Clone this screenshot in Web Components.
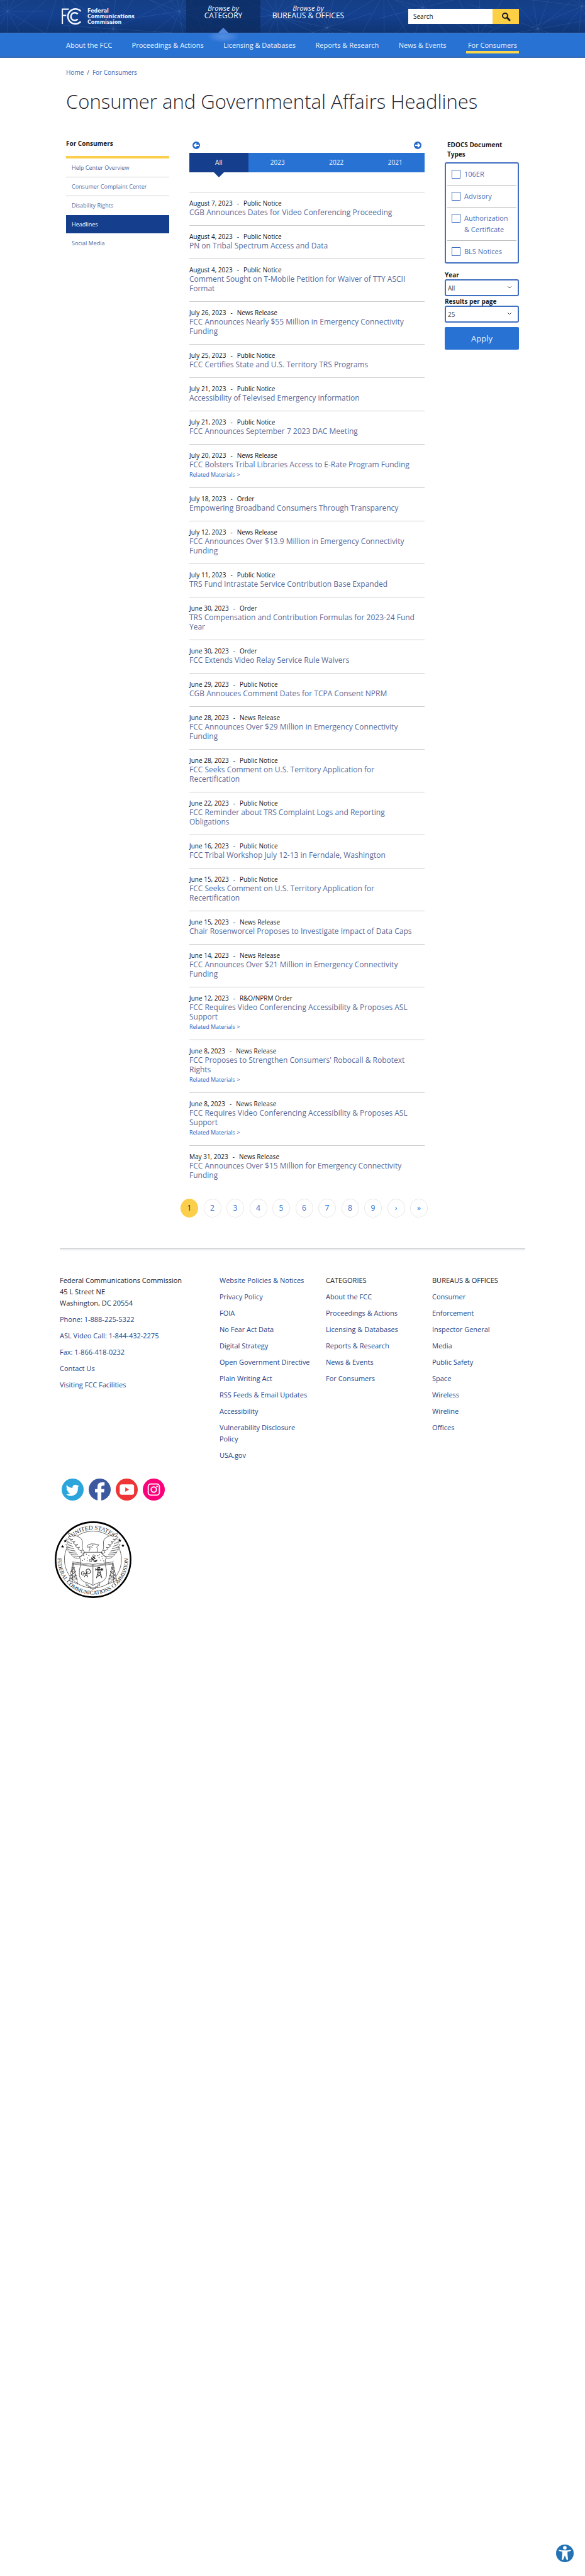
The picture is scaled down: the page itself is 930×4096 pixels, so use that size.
<!DOCTYPE html>
<html lang="en">
<head>
<meta charset="utf-8">
<meta name="viewport" content="width=device-width, initial-scale=1">
<title>Consumer and Governmental Affairs Headlines</title>
<style>
:root{--navy:#153f8c;--blue:#2872d4;--gold:#fccf4b;--link:#566a9b;--line:#ccc}
body{margin:0;min-height:100vh;background:#fff;color:#1c1c24;font-family:"Open Sans","Noto Sans",sans-serif;font-size:11px}
h1{margin:19px 0 40px;font-size:31px;line-height:40px;font-weight:300;color:#25252f}
.wrap{max-width:720px;margin:0 auto;padding-top:16px}
.columns{display:grid;grid-template-columns:164px minmax(0,1fr) 118px;column-gap:32px;align-items:start}
</style>
</head>
<body>
<site-header></site-header>
<site-nav></site-nav>
<main class="wrap">
  <bread-crumb></bread-crumb>
  <h1>Consumer and Governmental Affairs Headlines</h1>
  <div class="columns">
    <side-menu></side-menu>
    <section aria-label="Headlines">
      <year-tabs></year-tabs>
      <headline-list></headline-list>
      <page-list></page-list>
    </section>
    <edocs-filter></edocs-filter>
  </div>
</main>
<site-footer></site-footer>
<access-button></access-button>

<script>
const define = (name, html) => {
  const t = document.createElement('template');
  t.innerHTML = '<style>*{box-sizing:border-box}:host{display:block}a{text-decoration:none;color:inherit}ul{list-style:none;margin:0;padding:0}button,input,select{font-family:inherit}</style>' + html;
  customElements.define(name, class extends HTMLElement {
    constructor() {
      super();
      this.attachShadow({mode: 'open'}).append(t.content.cloneNode(true));
    }
  });
};

/* faint web of lines behind the masthead */
const nodes = [[12,18],[95,-20],[180,46],[285,18],[330,70],[440,24],[520,44],[610,-10],[672,12],[760,60],[855,46],[925,10]];
let web = '';
nodes.forEach(([x, y], i) => {
  for (let k = 0; k < 12; k++) {
    const a = (k * 30 + i * 17) * Math.PI / 180, r = 60 + (k * 37 + i * 23) % 70;
    web += `M${x} ${y}L${Math.round(x + r * Math.cos(a))} ${Math.round(y + r * Math.sin(a))}`;
  }
});

define('site-header', `
<style>
:host{position:relative;z-index:1;overflow:visible;background:linear-gradient(#153f85,#144090 45%,#0f3573)}
.web{position:absolute;left:0;top:0;width:100%;height:52px}
.bar{position:relative;max-width:720px;height:52px;margin:0 auto;display:grid;grid-template-columns:191px 118px 152px 1fr;color:#fff}
.logo{display:flex;gap:10px;margin:13px 0 0 -7px;font:bold 8px/9px "DejaVu Sans",sans-serif;color:#e9f2ff}
.logo svg{width:31px;height:27px}
.tab{padding-top:7px;text-align:center;font-size:12px;line-height:12px;position:relative;height:52px}
.tab i{display:block;font-size:11px;line-height:12px}
.on{background:#0c2a5db0}
.on::before{content:"";position:absolute;left:50%;margin-left:-8px;bottom:0;border:8px solid transparent;border-top:0;border-bottom-color:#5089de}
.on::after{content:"";position:absolute;left:50%;margin-left:-26px;top:48px;width:52px;height:20px;background:radial-gradient(closest-side,#5c92e4cc,#5c92e499 40%,transparent);clip-path:inset(4px 0 0 0)}
form{justify-self:end;margin-top:14px;display:flex;width:176px;height:24px}
input{flex:1;min-width:0;border:0;border-radius:0;padding:0 8px;font-size:10px;background:#fff;color:#111}
input::placeholder{color:#111;opacity:1}
button{width:42px;border:0;padding:0;background:#fccf45;display:grid;place-items:center}
button svg{width:15px;height:15px}
</style>
<svg class="web" viewBox="0 0 930 52" preserveAspectRatio="xMidYMid slice" aria-hidden="true"><path d="${web}" stroke="#6ea0d8" stroke-opacity=".17" fill="none"/></svg>
<div class="bar">
  <a class="logo" href="#" aria-label="FCC home">
    <svg viewBox="0 0 136 118" fill="none" stroke="#f1f7ff" aria-hidden="true">
      <path d="M5 109V7H50M5 50H32" stroke-width="9"/>
      <path d="M133 21A52 52 0 1 0 133 94" stroke-width="11"/>
      <path d="M112 41A27 27 0 1 0 112 76" stroke-width="11"/>
    </svg>
    <span>Federal<br>Communications<br>Commission</span>
  </a>
  <a class="tab on" href="#"><i>Browse by</i>CATEGORY</a>
  <a class="tab" href="#"><i>Browse by</i>BUREAUS &amp; OFFICES</a>
  <form role="search">
    <input type="search" placeholder="Search" aria-label="Search">
    <button type="button" aria-label="Search"><svg viewBox="0 0 15 15" fill="none" stroke="#1b1b20"><circle cx="6" cy="6" r="4" stroke-width="2"/><path d="M9 9l4 4" stroke-width="3" stroke-linecap="round"/></svg></button>
  </form>
</div>`);

define('site-nav', `
<style>
:host{background:linear-gradient(#3f73bb,#2872d4 2px,#2872d4 37px,#356cb8 38px);color:#eaf4ff}
nav{max-width:720px;margin:0 auto;padding:11px 0 7px;display:flex;justify-content:space-between}
a{font-size:11px;line-height:18px;border-bottom:4px solid transparent}
.on{border-color:#fbd64b;padding:0 3px}
</style>
<nav aria-label="Main"><a href="#">About the FCC</a><a href="#">Proceedings &amp; Actions</a><a href="#">Licensing &amp; Databases</a><a href="#">Reports &amp; Research</a><a href="#">News &amp; Events</a><a class="on" href="#">For Consumers</a></nav>`);

define('bread-crumb', `
<style>nav{display:flex;gap:5px;font-size:10px;line-height:14px;color:#555}a{color:#3768b8}</style>
<nav aria-label="Breadcrumb"><a href="#">Home</a><span>/</span><a href="#">For Consumers</a></nav>`);

define('side-menu', `
<style>
h2{margin:0 0 13px;font-size:10px;line-height:14px;font-weight:700}
ul{border-top:4px solid var(--gold)}
a{display:block;height:30px;padding:0 9px;font-size:9px;line-height:29px;color:var(--link);border-bottom:1px solid var(--line)}
.plain{border-color:transparent}
.on{background:var(--navy);border-color:#fff;color:#fff}
</style>
<h2>For Consumers</h2>
<ul><li><a href="#">Help Center Overview</a><li><a href="#">Consumer Complaint Center</a><li><a class="plain" href="#">Disability Rights</a><li><a class="on" href="#">Headlines</a><li><a class="plain" href="#">Social Media</a></ul>`);

define('year-tabs', `
<style>
.arrows{display:flex;justify-content:space-between;align-items:center;height:20px;padding:0 5px;margin-bottom:2px}
.arrows button{width:12px;height:12px;border:0;padding:0;border-radius:50%;background:#2468cc;display:grid}
svg{width:12px;height:12px;fill:none;stroke:#fff;stroke-width:2}
nav{display:grid;grid-template-columns:repeat(4,1fr);background:var(--blue);color:#f0f6ff;margin-bottom:31px}
a{position:relative;text-align:center;font-size:10px;line-height:31px}
.on{background:var(--navy)}
.on::after{content:"";position:absolute;left:50%;top:100%;margin-left:-8px;border:8px solid transparent;border-bottom:0;border-top-color:var(--navy)}
</style>
<div class="arrows"><button type="button" aria-label="Previous years"><svg viewBox="0 0 12 12"><path d="M10 6H3M6 3L3 6l3 3"/></svg></button><button type="button" aria-label="Next years"><svg viewBox="0 0 12 12"><path d="M2 6h7M6 3l3 3-3 3"/></svg></button></div>
<nav aria-label="Years"><a class="on" href="#">All</a><a href="#">2023</a><a href="#">2022</a><a href="#">2021</a></nav>`);

define('headline-item', `
<style>
:host{border-top:1px solid var(--line);padding:10px 0 13px}
.meta{display:flex;gap:7px;font-size:10px;line-height:14px;color:#111}
.title{font-size:12px;line-height:15px;color:var(--link)}
</style>
<div class="meta"><slot name="date"></slot><span>-</span><slot name="kind"></slot></div>
<a class="title" href="#"><slot></slot></a>
<slot name="related"></slot>`);

const PN = 'Public Notice', NR = 'News Release';
const headlines = [
 ['August 7, 2023', PN, 'CGB Announces Dates for Video Conferencing Proceeding'],
 ['August 4, 2023', PN, 'PN on Tribal Spectrum Access and Data'],
 ['August 4, 2023', PN, 'Comment Sought on T-Mobile Petition for Waiver of TTY ASCII Format'],
 ['July 26, 2023', NR, 'FCC Announces Nearly $55 Million in Emergency Connectivity Funding'],
 ['July 25, 2023', PN, 'FCC Certifies State and U.S. Territory TRS Programs'],
 ['July 21, 2023', PN, 'Accessibility of Televised Emergency information'],
 ['July 21, 2023', PN, 'FCC Announces September 7 2023 DAC Meeting'],
 ['July 20, 2023', NR, 'FCC Bolsters Tribal Libraries Access to E-Rate Program Funding', 1],
 ['July 18, 2023', 'Order', 'Empowering Broadband Consumers Through Transparency'],
 ['July 12, 2023', NR, 'FCC Announces Over $13.9 Million in Emergency Connectivity Funding'],
 ['July 11, 2023', PN, 'TRS Fund Intrastate Service Contribution Base Expanded'],
 ['June 30, 2023', 'Order', 'TRS Compensation and Contribution Formulas for 2023-24 Fund Year'],
 ['June 30, 2023', 'Order', 'FCC Extends Video Relay Service Rule Waivers'],
 ['June 29, 2023', PN, 'CGB Annouces Comment Dates for TCPA Consent NPRM'],
 ['June 28, 2023', NR, 'FCC Announces Over $29 Million in Emergency Connectivity Funding'],
 ['June 28, 2023', PN, 'FCC Seeks Comment on U.S. Territory Application for Recertification'],
 ['June 22, 2023', PN, 'FCC Reminder about TRS Complaint Logs and Reporting Obligations'],
 ['June 16, 2023', PN, 'FCC Tribal Workshop July 12-13 in Ferndale, Washington'],
 ['June 15, 2023', PN, 'FCC Seeks Comment on U.S. Territory Application for Recertification'],
 ['June 15, 2023', NR, 'Chair Rosenworcel Proposes to Investigate Impact of Data Caps'],
 ['June 14, 2023', NR, 'FCC Announces Over $21 Million in Emergency Connectivity Funding'],
 ['June 12, 2023', 'R&amp;O/NPRM Order', 'FCC Requires Video Conferencing Accessibility &amp; Proposes ASL Support', 1],
 ['June 8, 2023', NR, "FCC Proposes to Strengthen Consumers' Robocall &amp; Robotext Rights", 1],
 ['June 8, 2023', NR, 'FCC Requires Video Conferencing Accessibility &amp; Proposes ASL Support', 1],
 ['May 31, 2023', NR, 'FCC Announces Over $15 Million for Emergency Connectivity Funding'],
];
define('headline-list', '<style>a{display:block;padding-top:2px;font-size:9px;line-height:14px;color:#2a66c0}</style>' + headlines.map(([d, k, t, r]) =>
 `<headline-item><span slot="date">${d}</span><span slot="kind">${k}</span>${t}${r ? '<a slot="related" href="#">Related Materials &gt;</a>' : ''}</headline-item>`).join(''));

define('page-list', `
<style>
nav{display:flex;justify-content:space-between;margin:17px -5px 0 -14px}
a{width:28px;height:30px;border:1px solid #e9e9e9;border-radius:50%;text-align:center;font-size:12px;line-height:28px;color:#2f6fd0}
.on{background:var(--gold);border-color:var(--gold);color:#222}
</style>
<nav aria-label="Pages"><a class="on" href="#">1</a>${[2,3,4,5,6,7,8,9,'›','»'].map(n => `<a href="#">${n}</a>`).join('')}</nav>`);

define('edocs-filter', `
<style>
form{padding-top:2px}
fieldset{margin:0 0 11px;padding:0;border:0;min-width:0}
legend{padding:0 4px;margin-bottom:5px;font-size:10px;line-height:15px;font-weight:700}
.box{border:2px solid #3f6fc0;border-radius:3px}
.box label{display:grid;grid-template-columns:14px 1fr;column-gap:6px;margin:0 2px;padding:8px 8px 8px 7px;border-bottom:1px solid #bbb;font-size:11px;line-height:18px;color:#4a6fb8}
.box label:last-child{border:0}
input{appearance:none;width:14px;height:14px;margin:2px 0 0;border:1px solid #3a6ab8;outline:0}
.name{display:block;font-size:10px;line-height:14px;font-weight:700;margin-top:1px}
.pick{position:relative;height:27px}
select{appearance:none;width:100%;height:27px;border:2px solid #3f6fc0;border-radius:3px;background:#fff;padding:0 3px;font-size:10px;color:#444}
.pick svg{position:absolute;right:11px;top:9px;width:8px;height:8px;fill:none;stroke:#444;pointer-events:none}
button{width:100%;height:36px;margin-top:7px;border:0;border-radius:2px;background:var(--blue);color:#e9f2ff;font-size:13px}
</style>
<form>
<fieldset><legend>EDOCS Document Types</legend>
<div class="box">
<label><input type="checkbox"><span>106ER</span></label>
<label><input type="checkbox"><span>Advisory</span></label>
<label><input type="checkbox"><span>Authorization &amp; Certificate</span></label>
<label><input type="checkbox"><span>BLS Notices</span></label>
</div></fieldset>
<label class="name" for="year">Year</label>
<div class="pick"><select id="year"><option>All</option></select><svg viewBox="0 0 8 8"><path d="M1 2l3 3 3-3"/></svg></div>
<label class="name" for="per">Results per page</label>
<div class="pick"><select id="per"><option>25</option></select><svg viewBox="0 0 8 8"><path d="M1 2l3 3 3-3"/></svg></div>
<button type="button">Apply</button>
</form>`);

const star = (x, y) => `<path transform="translate(${x} ${y})" d="M0-11L3-3 11-3 5 2 7 10 0 5-7 10-5 2-11-3-3-3z" fill="#000" stroke="none"/>`;
/* one wing, shield half and tower; mirrored about x=284 for the other side */
const half = `
<path d="M108 101C130 118 165 120 190 135C225 155 205 190 212 215Q218 232 228 239M108 101Q118 130 135 128L112 134Q122 152 146 148L128 154Q140 172 160 166L146 174Q160 192 180 186L162 194Q172 212 192 204L180 215Q195 232 212 226L200 238Q210 252 226 240L208 262L194 272"/>
<path stroke-width="2" d="M122 150L100 146Q105 168 138 180L104 166Q105 188 146 198L96 184Q108 208 152 214L99 202Q112 228 162 230L105 220Q122 248 172 244L118 240Q138 264 180 256L132 256Q152 280 188 268L150 272Q168 290 196 278"/>
<path d="M228 239Q215 265 190 268Q202 290 200 322Q186 360 190 400Q200 440 240 448Q265 455 284 468"/>
<path stroke-width="2.5" d="M146 310L120 432M146 310L180 460M146 310L142 450M138 345H156L132 372H165L130 398H170L124 424H178M138 345L165 372 130 398 178 424M156 345L132 372 170 398 124 424M120 432L180 460"/>
<path stroke-width="2.5" d="M140 305L284 322M142 314L284 330M148 320L284 338"/>
<path d="M236 448L238 470 250 462 252 480 264 474 268 490 276 486 284 498"/>`;
define('fcc-seal', `
<style>:host{width:122px;height:122px}svg{display:block;width:122px;height:122px}text{font-family:"Liberation Serif",serif;fill:#222;stroke:none}</style>
<svg viewBox="20 25 530 530" fill="none" stroke="#222" stroke-width="3" role="img" aria-label="FCC seal">
<defs><path id="top" d="M77 289A207 207 0 0 1 491 289"/><path id="low" d="M48 230A243 243 0 1 0 520 230"/></defs>
<circle cx="285" cy="290" r="259" stroke="#000" stroke-width="11"/>
<path d="M178 124A197 197 0 0 1 392 124M108 200A197 197 0 1 0 460 200"/>
<text font-size="41" text-anchor="middle"><textPath href="#top" startOffset="50%">UNITED STATES</textPath></text>
<text font-size="38" text-anchor="middle"><textPath href="#low" startOffset="50%">FEDERAL COMMUNICATIONS COMMISSION</textPath></text>
${star(93,160)}${star(74,199)}${star(470,157)}${star(491,192)}
${half}<g transform="translate(568 0) scale(-1 1)">${half}</g>
<path d="M228 239H344M284 322V468M256 232Q268 216 262 202L244 204Q240 196 250 188Q272 176 298 182Q312 186 326 188Q312 196 310 204Q322 212 312 238M262 202Q272 198 280 206M276 190L286 192"/>
<g fill="#222" stroke="none">${[[220,262],[238,252],[256,262],[246,278],[226,286],[262,290],[212,296],[244,298],[330,256],[346,266],[326,276],[352,284],[336,294],[358,298],[318,262]].map(([x,y])=>`<circle cx="${x}" cy="${y}" r="3"/>`).join('')}</g>
<g stroke-width="3"><path d="M286 256L300 262 294 276 280 270zM264 292L278 288 274 304 260 302z"/><path d="M272 276L290 294M284 270L300 284" stroke-width="8"/><path d="M288 300Q306 312 314 292z" fill="#222"/></g>
<g stroke-width="4"><ellipse cx="252" cy="370" rx="14" ry="16" transform="rotate(-30 252 370)"/><ellipse cx="214" cy="384" rx="10" ry="13"/><path d="M238 380L224 412M238 380L248 412M230 396L246 404M214 384L236 388M252 370L236 384"/></g>
<g stroke-width="4"><path d="M326 344L308 418M326 344L346 418M318 376L336 384M314 392L342 406M336 376L314 396M338 390L310 412M302 358H352"/><path d="M304 350V366M314 348V366M342 348V366M352 350V366M316 344H334" stroke-width="6"/></g>
</svg>`);

define('site-footer', `
<style>
footer{max-width:740px;margin:49px auto 0;border-top:3px double #c4c8cc;padding:39px 0 40px;font-size:11px;line-height:18px;color:#1b1b2a}
.cols{display:grid;grid-template-columns:254px 169px 169px 1fr}
address{font-style:normal}
a{color:#22448a}
li{margin-bottom:8px}
li:last-child{margin-bottom:0}
.cols ul:nth-child(2){padding-right:22px}
.social{display:flex;gap:8px;margin:28px 0 33px 3px}
.social svg{display:block;width:35px;height:35px}
fcc-seal{margin-left:-8px}
</style>
<footer>
<div class="cols">
<ul><li><address>Federal Communications Commission<br>45 L Street NE<br>Washington, DC 20554</address><li><a href="#">Phone: 1-888-225-5322</a><li><a href="#">ASL Video Call: 1-844-432-2275</a><li><a href="#">Fax: 1-866-418-0232</a><li><a href="#">Contact Us</a><li><a href="#">Visiting FCC Facilities</a></ul>
<ul>${['Website Policies &amp; Notices','Privacy Policy','FOIA','No Fear Act Data','Digital Strategy','Open Government Directive','Plain Writing Act','RSS Feeds &amp; Email Updates','Accessibility','Vulnerability Disclosure Policy','USA.gov'].map(t=>`<li><a href="#">${t}</a>`).join('')}</ul>
<ul><li>CATEGORIES${['About the FCC','Proceedings &amp; Actions','Licensing &amp; Databases','Reports &amp; Research','News &amp; Events','For Consumers'].map(t=>`<li><a href="#">${t}</a>`).join('')}</ul>
<ul><li>BUREAUS &amp; OFFICES${['Consumer','Enforcement','Inspector General','Media','Public Safety','Space','Wireless','Wireline','Offices'].map(t=>`<li><a href="#">${t}</a>`).join('')}</ul>
</div>
<div class="social">
<a href="#" aria-label="Twitter"><svg viewBox="0 0 150 150"><circle cx="75" cy="75" r="75" fill="#2ba5dc"/><path fill="#fff" d="M118 49q-6 3-10 3 6-4 8-9-6 3-11 4a19 19 0 0 0-31 17q-24-1-39-19-8 14 6 25-5 0-8-2 0 15 15 19-4 1-8 0 4 12 17 13-11 9-27 8 42 25 72-8 9-13 9-30v-13q5-3 7-8z"/></svg></a>
<a href="#" aria-label="Facebook"><svg viewBox="0 0 150 150"><circle cx="75" cy="75" r="75" fill="#3c599f"/><path fill="#fff" d="M60 150V94H43V72H60V56Q60 26 90 26H108V48H96Q86 48 86 58V72H107L104 94H86V150z"/></svg></a>
<a href="#" aria-label="YouTube"><svg viewBox="0 0 150 150"><circle cx="75" cy="75" r="75" fill="#ee3434"/><rect x="27" y="40" width="98" height="70" rx="14" fill="#fff"/><path fill="#ee3434" d="M65 60L90 75 65 90z"/></svg></a>
<a href="#" aria-label="Instagram"><svg viewBox="0 0 150 150" fill="none" stroke="#fff" stroke-width="8"><circle cx="75" cy="75" r="75" fill="#fb007a" stroke="none"/><rect x="37" y="37" width="76" height="76" rx="17"/><circle cx="75" cy="75" r="18"/><circle cx="97" cy="53" r="5" fill="#fff" stroke="none"/></svg></a>
</div>
<fcc-seal></fcc-seal>
</footer>`);

define('access-button', `
<style>
:host{position:fixed;right:18px;bottom:22px}
button{display:block;width:28px;height:28px;padding:0;border:0;background:none}
svg{display:block;width:28px;height:28px}
</style>
<button type="button" aria-label="Accessibility options"><svg viewBox="0 0 120 120"><circle cx="60" cy="60" r="60" fill="#2272b4"/><circle cx="60" cy="22" r="12" fill="#fff"/><path fill="#fff" d="M20 36Q60 44 100 36L102 43Q90 47 78 49V70L82 104H72L60 74 48 104H38L42 70V49Q30 47 18 43z"/></svg></button>`);
</script>
</body>
</html>
